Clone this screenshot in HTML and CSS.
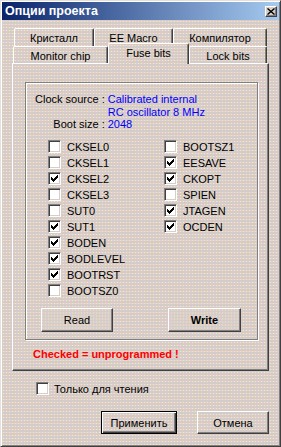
FILE: index.html
```html
<!DOCTYPE html>
<html lang="ru">
<head>
    <meta charset="UTF-8">
    <title>Опции проекта</title>
    <link rel="stylesheet" href="styles.css">
</head>
<body>
    <div class="window face">
        <div class="titlebar">
            <span class="title">Опции проекта</span>
            <button class="close face">
                <svg width="8" height="7" viewBox="0 0 8 7"><path d="M0.5 0.5 L7.5 6.5 M7.5 0.5 L0.5 6.5" stroke="#000" stroke-width="1.4"/></svg>
            </button>
        </div>

        <div class="content">
            <div class="tabs">
                <div class="tab-row back">
                    <div class="tab w80">Кристалл</div>
                    <div class="tab w79">EE Macro</div>
                    <div class="tab w94">Компилятор</div>
                </div>
                <div class="tab-row front">
                    <div class="tab w95">Monitor chip</div>
                    <div class="tab active face w81">Fuse bits</div>
                    <div class="tab w78">Lock bits</div>
                </div>
            </div>

            <div class="panel">
                <div class="group">
                    <div class="info">
                        <span class="key">Clock source :</span>
                        <span class="val">Calibrated internal<br>RC oscillator 8 MHz</span>
                        <span class="key">Boot size :</span>
                        <span class="val">2048</span>
                    </div>

                    <div class="bits">
                        <label class="bit"><span class="box"></span>CKSEL0</label>
                        <label class="bit"><span class="box"></span>CKSEL1</label>
                        <label class="bit"><span class="box"><svg class="check" viewBox="0 0 7 7"><path d="M0 2h1v1h1v1h1v-1h1v-1h1v-1h1v-1h1v3h-1v1h-1v1h-1v1h-1v1h-1v-1h-1v-1h-1z"/></svg></span>CKSEL2</label>
                        <label class="bit"><span class="box"></span>CKSEL3</label>
                        <label class="bit"><span class="box"></span>SUT0</label>
                        <label class="bit"><span class="box"><svg class="check" viewBox="0 0 7 7"><path d="M0 2h1v1h1v1h1v-1h1v-1h1v-1h1v-1h1v3h-1v1h-1v1h-1v1h-1v1h-1v-1h-1v-1h-1z"/></svg></span>SUT1</label>
                        <label class="bit"><span class="box"><svg class="check" viewBox="0 0 7 7"><path d="M0 2h1v1h1v1h1v-1h1v-1h1v-1h1v-1h1v3h-1v1h-1v1h-1v1h-1v1h-1v-1h-1v-1h-1z"/></svg></span>BODEN</label>
                        <label class="bit"><span class="box"><svg class="check" viewBox="0 0 7 7"><path d="M0 2h1v1h1v1h1v-1h1v-1h1v-1h1v-1h1v3h-1v1h-1v1h-1v1h-1v1h-1v-1h-1v-1h-1z"/></svg></span>BODLEVEL</label>
                        <label class="bit"><span class="box"><svg class="check" viewBox="0 0 7 7"><path d="M0 2h1v1h1v1h1v-1h1v-1h1v-1h1v-1h1v3h-1v1h-1v1h-1v1h-1v1h-1v-1h-1v-1h-1z"/></svg></span>BOOTRST</label>
                        <label class="bit"><span class="box"></span>BOOTSZ0</label>
                        <label class="bit"><span class="box"></span>BOOTSZ1</label>
                        <label class="bit"><span class="box"><svg class="check" viewBox="0 0 7 7"><path d="M0 2h1v1h1v1h1v-1h1v-1h1v-1h1v-1h1v3h-1v1h-1v1h-1v1h-1v1h-1v-1h-1v-1h-1z"/></svg></span>EESAVE</label>
                        <label class="bit"><span class="box"><svg class="check" viewBox="0 0 7 7"><path d="M0 2h1v1h1v1h1v-1h1v-1h1v-1h1v-1h1v3h-1v1h-1v1h-1v1h-1v1h-1v-1h-1v-1h-1z"/></svg></span>CKOPT</label>
                        <label class="bit"><span class="box"></span>SPIEN</label>
                        <label class="bit"><span class="box"><svg class="check" viewBox="0 0 7 7"><path d="M0 2h1v1h1v1h1v-1h1v-1h1v-1h1v-1h1v3h-1v1h-1v1h-1v1h-1v1h-1v-1h-1v-1h-1z"/></svg></span>JTAGEN</label>
                        <label class="bit"><span class="box"><svg class="check" viewBox="0 0 7 7"><path d="M0 2h1v1h1v1h1v-1h1v-1h1v-1h1v-1h1v3h-1v1h-1v1h-1v1h-1v1h-1v-1h-1v-1h-1z"/></svg></span>OCDEN</label>
                    </div>

                    <div class="group-buttons">
                        <button class="btn face read">Read</button>
                        <button class="btn face write">Write</button>
                    </div>
                </div>
                <div class="note">Checked = unprogrammed !</div>
            </div>

            <label class="readonly"><span class="box"></span>Только для чтения</label>

            <div class="actions">
                <button class="btn face default apply">Применить</button>
                <button class="btn face cancel">Отмена</button>
            </div>
        </div>
    </div>
</body>
</html>
```

FILE: styles.css
```css
* {
    margin: 0;
    padding: 0;
    box-sizing: border-box;
}

body {
    width: 281px;
    height: 447px;
    font-family: "Liberation Sans", Arial, sans-serif;
    font-size: 11px;
    color: #000;
    overflow: hidden;
}

/* dithered dialog face */
.face {
    background-color: #d4ccc9;
    background-image:
        linear-gradient(to bottom, transparent 1px, #d4ccc9 1px),
        linear-gradient(to right, #efecb4 1px, #e6ccd2 1px);
    background-size: 3px 3px;
    background-attachment: fixed;
}

.window {
    width: 281px;
    height: 447px;
    padding: 1px;
    border: 1px solid;
    border-color: #e4e0dc #404040 #404040 #e4e0dc;
    box-shadow: inset 1px 1px #fff, inset -1px -1px #808080;
    display: flex;
    flex-direction: column;
}

.titlebar {
    height: 18px;
    display: flex;
    align-items: center;
    justify-content: space-between;
    padding: 0 2px 0 3px;
    background: linear-gradient(to right, #0a246a, #a6caf0);
}

.title {
    color: #fff;
    font-weight: bold;
    font-size: 12.5px;
}

.close {
    width: 12px;
    height: 11px;
    border: 1px solid;
    border-color: #fff #404040 #404040 #fff;
    box-shadow: inset -1px -1px #808080;
    display: flex;
    align-items: center;
    justify-content: center;
}

.content {
    padding: 8px 10px 0 10px;
    display: flex;
    flex-direction: column;
}

/* tabs */
.tabs {
    display: flex;
    flex-direction: column;
    padding-left: 1px;
}

.tab-row {
    display: flex;
}

.tab-row.back {
    padding-left: 1px;
}

.tab {
    height: 18px;
    display: flex;
    align-items: center;
    justify-content: center;
    border-top: 1px solid #fff;
    border-left: 1px solid #fff;
    border-right: 1px solid #404040;
    box-shadow: inset -1px 0 #808080;
    border-radius: 2px 2px 0 0;
    white-space: nowrap;
}

.tab-row.front .tab {
    height: 17px;
    padding-top: 1px;
}

.tab-row.front .tab.active {
    height: 21px;
    margin-top: -3px;
    margin-bottom: -1px;
    padding-top: 0;
    padding-bottom: 3px;
    position: relative;
    z-index: 1;
}

.w78 { width: 78px; }
.w79 { width: 79px; }
.w80 { width: 80px; }
.w81 { width: 81px; }
.w94 { width: 94px; }
.w95 { width: 95px; }

.panel {
    width: 257px;
    height: 308px;
    border: 1px solid;
    border-color: #fff #404040 #404040 #fff;
    box-shadow: inset -1px -1px #808080;
    padding: 18px 10px 0 12px;
    display: flex;
    flex-direction: column;
}

.group {
    height: 258px;
    border: 1px solid #808080;
    box-shadow: inset 1px 1px #fff, 1px 1px #fff;
    padding: 10px 0 0 9px;
    display: flex;
    flex-direction: column;
}

.info {
    display: grid;
    grid-template-columns: max-content auto;
    column-gap: 3px;
    line-height: 12.5px;
}

.key {
    text-align: right;
    white-space: nowrap;
}

.val {
    color: #0000ff;
}

.bits {
    margin-top: 8px;
    padding-left: 13px;
    display: grid;
    grid-template-columns: 116px auto;
    grid-template-rows: repeat(10, 16px);
    grid-auto-flow: column;
}

.bit,
.readonly {
    display: flex;
    align-items: center;
    gap: 6px;
    white-space: nowrap;
}

.box {
    width: 13px;
    height: 13px;
    flex-shrink: 0;
    background: #fff;
    border: 1px solid;
    border-color: #808080 #fff #fff #808080;
    box-shadow: inset 1px 1px #404040, inset -1px -1px #d4d0c8;
    display: flex;
    align-items: center;
    justify-content: center;
}

.check {
    width: 7px;
    height: 7px;
    fill: #000;
}

.group-buttons {
    margin-top: 9px;
    padding-left: 6px;
    display: flex;
    gap: 55px;
}

.btn {
    height: 24px;
    font-family: inherit;
    font-size: 11px;
    color: #000;
    border: 1px solid;
    border-color: #fff #404040 #404040 #fff;
    box-shadow: inset -1px -1px #808080;
}

.read { width: 72px; }

.write {
    width: 73px;
    font-weight: bold;
}

.note {
    margin-top: 8px;
    padding-left: 8px;
    color: #ff0000;
    font-weight: bold;
}

.readonly {
    margin: 11px 0 0 24px;
    gap: 5px;
}

.actions {
    margin-top: 16px;
    display: flex;
    justify-content: flex-end;
    gap: 20px;
    width: 257px;
}

.apply {
    width: 76px;
    height: 23px;
}

.btn.default {
    border: 1px solid #000;
    box-shadow: inset 1px 1px #fff, inset -1px -1px #404040, inset -2px -2px #808080;
}

.cancel {
    width: 72px;
    height: 23px;
}
```
